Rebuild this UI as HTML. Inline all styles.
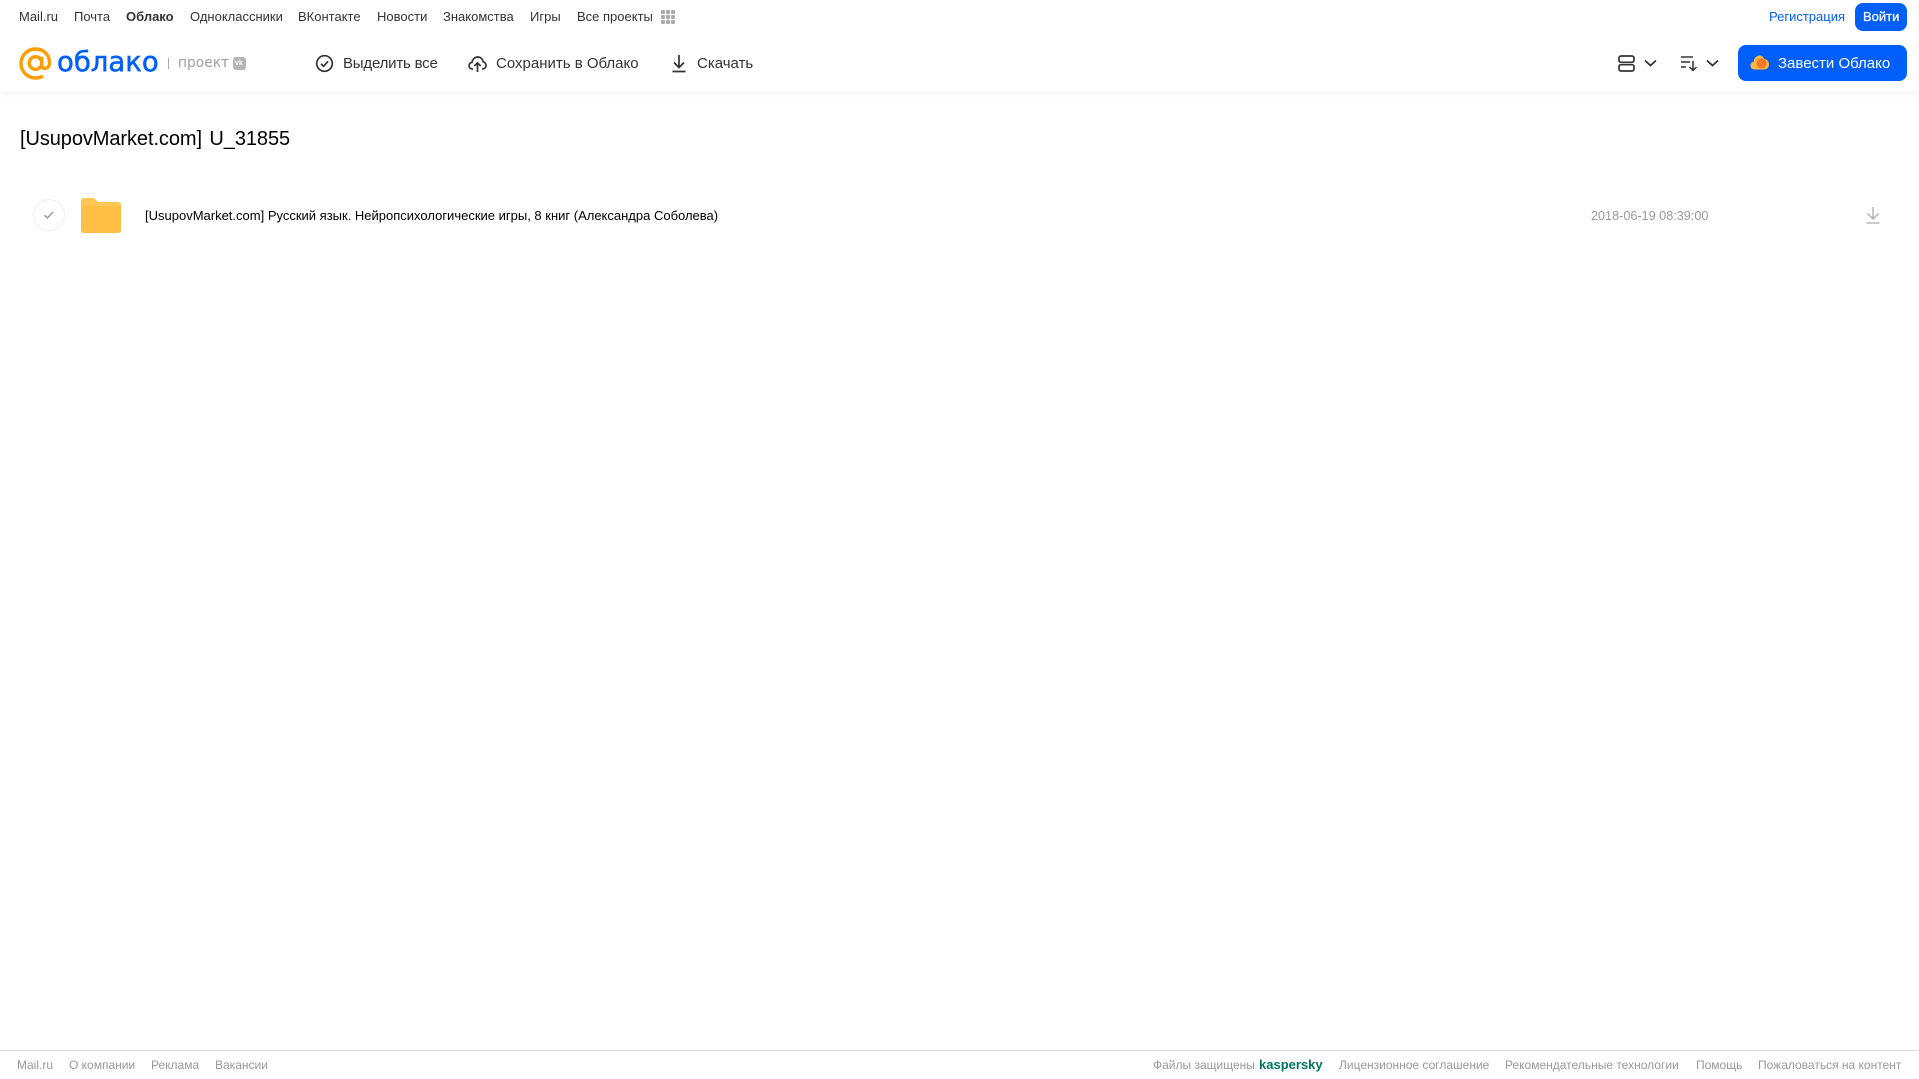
<!DOCTYPE html>
<html lang="ru"><head><meta charset="utf-8"><title>Облако</title>
<style>
html,body{margin:0;padding:0;background:#fff;width:1919px;height:1079px;overflow:hidden}
body{font-family:"Liberation Sans",Arial,sans-serif;position:relative}
.t{position:absolute;white-space:nowrap;line-height:16px}
.n{font-size:13px;color:#333;top:9px}
.a{font-size:15px;color:#333;top:55px;font-family:"Liberation Sans",sans-serif}
.f{font-size:12px;color:#999;top:1057px}
svg{position:absolute;overflow:visible}
.b{position:absolute;background:#005ff9}
#hd{position:absolute;left:0;top:0;width:1919px;height:91px;background:#fff;box-shadow:0 2px 8px rgba(0,0,0,.06)}
</style></head><body>
<div id="hd"></div>
<span class="t n" style="left:19px">Mail.ru</span>
<span class="t n" style="left:74px">Почта</span>
<span class="t n" style="left:126px;font-weight:bold">Облако</span>
<span class="t n" style="left:190px">Одноклассники</span>
<span class="t n" style="left:298px">ВКонтакте</span>
<span class="t n" style="left:377px">Новости</span>
<span class="t n" style="left:443px">Знакомства</span>
<span class="t n" style="left:530px">Игры</span>
<span class="t n" style="left:577px">Все проекты</span>
<svg style="left:660px;top:9px" width="16" height="16" fill="#aaa"><rect x="1" y="1" width="4" height="4" rx="1"/><rect x="6" y="1" width="4" height="4" rx="1"/><rect x="11" y="1" width="4" height="4" rx="1"/><rect x="1" y="6" width="4" height="4" rx="1"/><rect x="6" y="6" width="4" height="4" rx="1"/><rect x="11" y="6" width="4" height="4" rx="1"/><rect x="1" y="11" width="4" height="4" rx="1"/><rect x="6" y="11" width="4" height="4" rx="1"/><rect x="11" y="11" width="4" height="4" rx="1"/></svg>
<span class="t n" style="left:1769px;color:#005ff9">Регистрация</span>
<div class="b" style="left:1855px;top:3px;width:52px;height:28px;border-radius:8px"></div>
<span class="t n" style="left:1863px;color:#fff;font-size:13px;-webkit-text-stroke:.3px #fff">Войти</span>

<svg style="left:19px;top:47px" width="33" height="33" viewBox="0 0 33 33" fill="none" stroke="#ff9e00" stroke-width="3.4"><circle cx="16.5" cy="16" r="6.3"/><path d="M22.8 9.8V18.5C22.8 22.5 29.8 22.5 30.4 17C31.2 8.5 25 2 16.5 2 8.5 2 2 8.5 2 16.5S8.5 31 16.5 31C19.5 31 22 30.2 24 29"/></svg>
<span class="t" style="left:57px;top:44px;font-family:'DejaVu Sans',sans-serif;font-size:27.5px;line-height:36px;color:#005ff9;-webkit-text-stroke:.5px #005ff9">облако</span>
<div style="position:absolute;left:168px;top:58px;width:1px;height:11px;background:#aaa"></div>
<span class="t" style="left:178px;top:55px;font-family:'DejaVu Sans',sans-serif;font-size:13.8px;color:#aaa;-webkit-text-stroke:.2px #aaa">проект</span>
<div style="position:absolute;left:233px;top:57px;width:13px;height:13px;background:#b5b5b5;border-radius:3px"></div>
<span class="t" style="left:235px;top:58px;font-size:7px;line-height:11px;color:#fff;font-weight:bold">vk</span>

<svg style="left:315px;top:54px" width="19" height="19" fill="none" stroke="#333" stroke-width="1.7"><circle cx="9.5" cy="9.5" r="7.8"/><path d="M6 9.8l2.6 2.5 4.4-5"/></svg>
<span class="t a" style="left:343px;top:56px;letter-spacing:-.2px">Выделить все</span>
<svg style="left:468px;top:54px" width="19" height="19" fill="none" stroke="#333" stroke-width="1.7"><path d="M5 15H4.500C2.500 15 1 13.500 1 11.700 1 10 2.300 8.600 4 8.400 4.400 5.400 6.700 3 9.700 3 12.500 3 14.800 5 15.200 7.800 16.900 8.200 18 9.700 18 11.400 18 13.400 16.400 15 14.400 15H14"/><path d="M9.500 18V9M6.300 12L9.500 8.800 12.700 12"/></svg>
<span class="t a" style="left:496px;top:56px">Сохранить в Облако</span>
<svg style="left:670px;top:54px" width="18" height="19" fill="none" stroke="#333" stroke-width="1.7"><path d="M9 1V13M4 8.500L9 13.500 14 8.500M2.500 17.500H15.500"/></svg>
<span class="t a" style="left:697px;top:56px">Скачать</span>

<svg style="left:1618px;top:55px" width="17" height="17" fill="none" stroke="#333" stroke-width="1.7"><rect x="1" y="1" width="15" height="6.300" rx="2"/><rect x="1" y="9.700" width="15" height="6.300" rx="2"/></svg>
<svg style="left:1644px;top:59px" width="13" height="8" fill="none" stroke="#333" stroke-width="1.8"><path d="M1 1.500L6.500 6.500 12 1.500"/></svg>
<svg style="left:1681px;top:55px" width="17" height="17" fill="none" stroke="#333" stroke-width="1.500"><path d="M0 2H12M0 7H9M0 12H5"/><path d="M12 6V15.500M8.500 12L12 15.500 15.500 12"/></svg>
<svg style="left:1706px;top:59px" width="13" height="8" fill="none" stroke="#333" stroke-width="1.8"><path d="M1 1.500L6.500 6.500 12 1.500"/></svg>

<div class="b" style="left:1738px;top:45px;width:169px;height:36px;border-radius:8px"></div>
<svg style="left:1750px;top:54px" width="20" height="17"><path d="M4.500 15.500C2 15.500.5 13.500.5 11.500.5 9.500 1.800 8 3.700 7.600 4 4 6.500 1.500 9.500 1.500 11.800 1.500 13.500 3 14.300 5 17 5.300 19 7.500 19 10.300 19 13.200 17 15.500 14 15.500Z" fill="#ffb53c"/><circle cx="11.500" cy="9.500" r="5" fill="#f5762a"/></svg>
<span class="t a" style="left:1778px;top:56px;color:#fff">Завести Облако</span>

<span class="t" style="left:20px;top:126px;font-size:20px;line-height:26px;color:#000;word-spacing:2px;letter-spacing:-.08px">[UsupovMarket.com] U_31855</span>

<svg style="left:33px;top:199px" width="32" height="32" fill="none"><circle cx="16" cy="16" r="15.500" stroke="#efefef"/><path d="M11.500 16.300L14.500 19 20 13" stroke="#999" stroke-width="1.500"/></svg>
<svg style="left:81px;top:198px" width="40" height="35"><path d="M0 3C0 1.300 1.300 0 3 0H11C13 0 14 .8 15 2L17 4H37C38.700 4 40 5.300 40 7V32C40 33.700 38.700 35 37 35H3C1.300 35 0 33.700 0 32Z" fill="#ffc654"/><path d="M0 8H40V32C40 33.700 38.700 35 37 35H3C1.300 35 0 33.700 0 32Z" fill="#ffbe45"/></svg>
<span class="t" style="left:145px;top:208px;font-size:13px;color:#000">[UsupovMarket.com] Русский язык. Нейропсихологические игры, 8 книг (Александра Соболева)</span>
<span class="t" style="left:1591px;top:208px;font-size:12.65px;color:#999">2018-06-19 08:39:00</span>
<svg style="left:1866px;top:206px" width="14" height="18" fill="none" stroke="#aaa" stroke-width="1.300"><path d="M7 1V12.500M1.500 7.500L7 13 12.500 7.500M.5 17H13.500"/></svg>

<div style="position:absolute;left:0;top:1050px;width:1919px;height:1px;background:#dcdcdc"></div>
<span class="t f" style="left:17px">Mail.ru</span>
<span class="t f" style="left:69px">О компании</span>
<span class="t f" style="left:151px">Реклама</span>
<span class="t f" style="left:215px">Вакансии</span>
<span class="t f" style="left:1153px">Файлы защищены</span>
<span class="t f" style="left:1259px;color:#00755e;font-weight:bold;font-size:13px">kaspersky</span>
<span class="t f" style="left:1339px">Лицензионное соглашение</span>
<span class="t f" style="left:1505px">Рекомендательные технологии</span>
<span class="t f" style="left:1696px">Помощь</span>
<span class="t f" style="left:1758px">Пожаловаться на контент</span>
</body></html>
